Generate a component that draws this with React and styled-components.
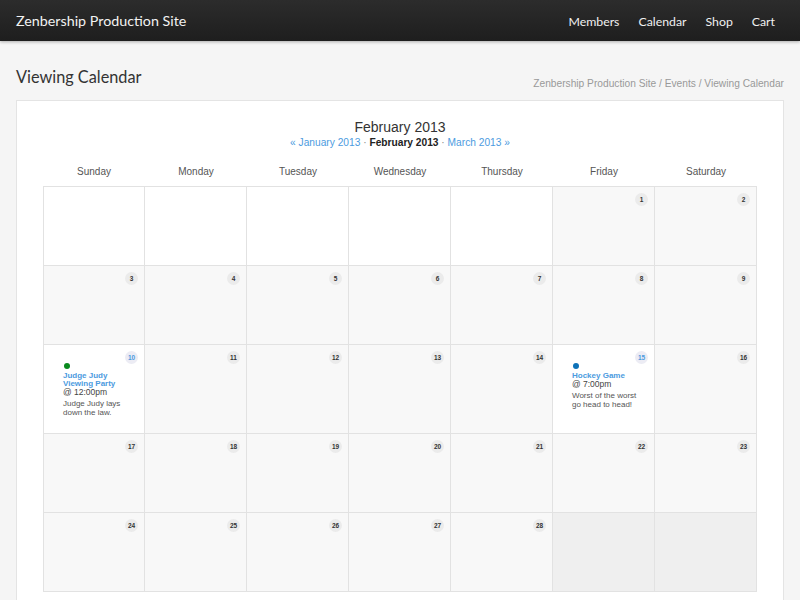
import React from 'react';
import styled, { createGlobalStyle } from 'styled-components';

const GlobalStyle = createGlobalStyle`
  *, *::before, *::after {
    box-sizing: border-box;
  }
  html, body {
    margin: 0;
    padding: 0;
    background: #f5f5f5;
    font-family: "Liberation Sans", Arial, sans-serif;
  }
`;

const NavBar = styled.div`
  height: 41px;
  background: linear-gradient(#2c2c2c, #1e1e1e);
  display: flex;
  align-items: center;
  justify-content: space-between;
  padding: 0 25px 0 16px;
  box-shadow: 0 1px 3px rgba(0, 0, 0, 0.3);
  font-family: Lato, "Open Sans", sans-serif;
`;

const Brand = styled.div`
  color: #f2f2f2;
  font-size: 14.3px;
`;

const NavLinks = styled.div`
  display: flex;
  gap: 19px;
  padding-top: 1px;
`;

const NavLink = styled.a`
  color: #f0f0f0;
  font-size: 12.3px;
  text-decoration: none;
`;

const Main = styled.div`
  padding: 0 16px;
`;

const HeadRow = styled.div`
  display: flex;
  justify-content: space-between;
  align-items: flex-end;
  height: 59px;
  padding-bottom: 12px;
`;

const PageTitle = styled.h1`
  margin: 0 0 1px;
  font-family: Lato, "Open Sans", sans-serif;
  font-weight: 400;
  font-size: 16.3px;
  color: #333;
  line-height: 20px;
`;

const Crumbs = styled.div`
  font-size: 10.2px;
  color: #999;
  margin-bottom: -1px;
`;

const Panel = styled.div`
  background: #fff;
  border: 1px solid #e4e4e4;
  padding: 18px 26px 20px;
`;

const CalTitle = styled.div`
  text-align: center;
  font-size: 14px;
  color: #333;
  line-height: 17px;
`;

const MonthNav = styled.div`
  text-align: center;
  font-size: 10.2px;
  color: #888;
  line-height: 13px;
  margin-bottom: 17px;
`;

const MonthLink = styled.a`
  color: ${({ current }) => (current ? '#222' : '#4c9be0')};
  font-weight: ${({ current }) => (current ? 700 : 400)};
  text-decoration: none;
`;

const Grid = styled.div`
  display: grid;
  grid-template-columns: repeat(7, 1fr);
`;

const DayName = styled.div`
  text-align: center;
  font-size: 10px;
  color: #555;
  height: 20px;
`;

const Cell = styled.div`
  position: relative;
  height: ${({ h }) => h}px;
  border-right: 1px solid #e2e2e2;
  border-bottom: 1px solid #e2e2e2;
  border-left: ${({ first }) => (first ? '1px solid #e2e2e2' : 'none')};
  border-top: ${({ top }) => (top ? '1px solid #e2e2e2' : 'none')};
  background: ${({ bg }) => bg};
  padding: 18px 8px 0 19px;
`;

const Badge = styled.span`
  position: absolute;
  top: 6px;
  right: 6px;
  width: 13px;
  height: 13px;
  border-radius: 50%;
  background: ${({ active }) => (active ? '#ececf4' : '#ebebeb')};
  color: ${({ active }) => (active ? '#4c9be0' : '#333')};
  font-size: 6.5px;
  font-weight: 700;
  display: flex;
  align-items: center;
  justify-content: center;
`;

const Dot = styled.span`
  display: block;
  width: 6px;
  height: 6px;
  border-radius: 50%;
  background: ${({ color }) => color};
  margin: 0 0 3px 1px;
`;

const EventTitle = styled.a`
  display: block;
  color: #4c9be0;
  font-weight: 700;
  font-size: 8px;
  line-height: 8px;
  text-decoration: none;
`;

const EventTime = styled.div`
  font-size: 8.5px;
  color: #444;
  line-height: 9px;
  margin-bottom: 2px;
`;

const EventDesc = styled.div`
  font-size: 8px;
  color: #555;
  line-height: 9px;
`;

const days = ['Sunday', 'Monday', 'Tuesday', 'Wednesday', 'Thursday', 'Friday', 'Saturday'];

const events = {
  10: { color: '#0a8a1e', title: ['Judge Judy', 'Viewing Party'], time: '@ 12:00pm', desc: ['Judge Judy lays', 'down the law.'] },
  15: { color: '#0d72b8', title: ['Hockey Game'], time: '@ 7:00pm', desc: ['Worst of the worst', 'go head to head!'] },
};

const rowHeights = [80, 79, 89, 79, 79];

const cells = [];
for (let i = 0; i < 35; i++) {
  const d = i - 4;
  cells.push(d >= 1 && d <= 28 ? d : null);
}

const App = () => {
  return (
    <>
      <GlobalStyle />
      <NavBar>
        <Brand>Zenbership Production Site</Brand>
        <NavLinks>
          <NavLink href="#">Members</NavLink>
          <NavLink href="#">Calendar</NavLink>
          <NavLink href="#">Shop</NavLink>
          <NavLink href="#">Cart</NavLink>
        </NavLinks>
      </NavBar>
      <Main>
        <HeadRow>
          <PageTitle>Viewing Calendar</PageTitle>
          <Crumbs>Zenbership Production Site / Events / Viewing Calendar</Crumbs>
        </HeadRow>
        <Panel>
          <CalTitle>February 2013</CalTitle>
          <MonthNav>
            <MonthLink href="#">« January 2013</MonthLink> ·{' '}
            <MonthLink current>February 2013</MonthLink> ·{' '}
            <MonthLink href="#">March 2013 »</MonthLink>
          </MonthNav>
          <Grid>
            {days.map((d) => (
              <DayName key={d}>{d}</DayName>
            ))}
            {cells.map((d, i) => {
              const ev = d && events[d];
              const row = Math.floor(i / 7);
              let bg = '#f8f8f8';
              if (d === null) bg = row === 0 ? '#fff' : '#efefef';
              if (ev) bg = '#fff';
              return (
                <Cell key={i} bg={bg} first={i % 7 === 0} top={row === 0} h={rowHeights[row]}>
                  {d && <Badge active={!!ev}>{d}</Badge>}
                  {ev && (
                    <>
                      <Dot color={ev.color} />
                      <EventTitle href="#">
                        {ev.title.map((t) => (
                          <div key={t}>{t}</div>
                        ))}
                      </EventTitle>
                      <EventTime>{ev.time}</EventTime>
                      <EventDesc>
                        {ev.desc.map((t) => (
                          <div key={t}>{t}</div>
                        ))}
                      </EventDesc>
                    </>
                  )}
                </Cell>
              );
            })}
          </Grid>
        </Panel>
      </Main>
    </>
  );
};

export default App;
